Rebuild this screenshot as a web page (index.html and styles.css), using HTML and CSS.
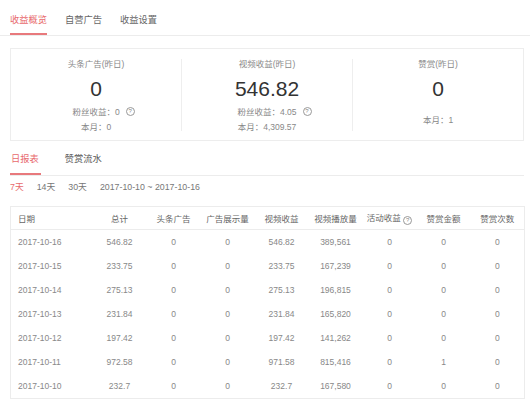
FILE: index.html
```html
<!DOCTYPE html>
<html lang="zh-CN">
<head>
<meta charset="utf-8">
<title>收益概览</title>
<link rel="stylesheet" href="styles.css">
</head>
<body>
<div class="topnav">
  <div class="tab active">收益概览</div>
  <div class="tab">自营广告</div>
  <div class="tab">收益设置</div>
</div>
<div class="content">
  <div class="summary">
    <div class="stat">
      <div class="stat-label">头条广告(昨日)</div>
      <div class="stat-value">0</div>
      <div class="stat-line first"><span class="with-help">粉丝收益：0<i class="help">?</i></span></div>
      <div class="stat-line second">本月：0</div>
    </div>
    <div class="stat">
      <div class="stat-label">视频收益(昨日)</div>
      <div class="stat-value">546.82</div>
      <div class="stat-line first"><span class="with-help">粉丝收益：4.05<i class="help">?</i></span></div>
      <div class="stat-line second">本月：4,309.57</div>
    </div>
    <div class="stat">
      <div class="stat-label">赞赏(昨日)</div>
      <div class="stat-value">0</div>
      <div class="stat-line single">本月：1</div>
    </div>
  </div>

  <div class="subnav">
    <div class="subtab active">日报表</div>
    <div class="subtab">赞赏流水</div>
  </div>

  <div class="filters">
    <span class="range active">7天</span>
    <span class="range">14天</span>
    <span class="range">30天</span>
    <span class="dates">2017-10-10 ~ 2017-10-16</span>
  </div>

  <table class="report">
    <colgroup>
      <col class="c-date">
      <col class="c-num"><col class="c-num"><col class="c-num"><col class="c-num">
      <col class="c-num"><col class="c-num"><col class="c-num"><col class="c-num">
    </colgroup>
    <thead>
      <tr>
        <th class="date">日期</th>
        <th>总计</th>
        <th>头条广告</th>
        <th>广告展示量</th>
        <th>视频收益</th>
        <th>视频播放量</th>
        <th>活动收益 <i class="help inline">?</i></th>
        <th>赞赏金额</th>
        <th>赞赏次数</th>
      </tr>
    </thead>
    <tbody>
      <tr><td class="date">2017-10-16</td><td>546.82</td><td>0</td><td>0</td><td>546.82</td><td>389,561</td><td>0</td><td>0</td><td>0</td></tr>
      <tr><td class="date">2017-10-15</td><td>233.75</td><td>0</td><td>0</td><td>233.75</td><td>167,239</td><td>0</td><td>0</td><td>0</td></tr>
      <tr><td class="date">2017-10-14</td><td>275.13</td><td>0</td><td>0</td><td>275.13</td><td>196,815</td><td>0</td><td>0</td><td>0</td></tr>
      <tr><td class="date">2017-10-13</td><td>231.84</td><td>0</td><td>0</td><td>231.84</td><td>165,820</td><td>0</td><td>0</td><td>0</td></tr>
      <tr><td class="date">2017-10-12</td><td>197.42</td><td>0</td><td>0</td><td>197.42</td><td>141,262</td><td>0</td><td>0</td><td>0</td></tr>
      <tr><td class="date">2017-10-11</td><td>972.58</td><td>0</td><td>0</td><td>971.58</td><td>815,416</td><td>0</td><td>1</td><td>0</td></tr>
      <tr><td class="date">2017-10-10</td><td>232.7</td><td>0</td><td>0</td><td>232.7</td><td>167,580</td><td>0</td><td>0</td><td>0</td></tr>
    </tbody>
  </table>
</div>
</body>
</html>
```

FILE: styles.css
```css
html, body {
  margin: 0;
  padding: 0;
  background: #ffffff;
}

body {
  font-family: "Liberation Sans", "Noto Sans CJK SC", sans-serif;
  color: #777777;
  width: 530px;
  height: 400px;
  overflow: hidden;
}

/* top navigation */
.topnav {
  display: flex;
  gap: 18px;
  padding: 0 10px;
  border-bottom: 1px solid #ececec;
}

.tab {
  font-size: 9.25px;
  line-height: 13px;
  padding-top: 14px;
  padding-bottom: 6px;
  border-bottom: 2px solid transparent;
  color: #666666;
}

.tab.active {
  color: #e86a6d;
  border-bottom-color: #e8797c;
}

.content {
  padding: 0 6px 0 10px;
}

/* summary card */
.summary {
  margin-top: 12px;
  border: 1px solid #ededed;
  display: flex;
  padding: 10px 0 9px;
}

.stat {
  flex: 1 1 0;
  height: 72px;
  text-align: center;
}

.stat + .stat {
  border-left: 1px solid #eeeeee;
}

.stat-label {
  font-size: 8.5px;
  line-height: 11px;
  color: #888888;
}

.stat-value {
  font-size: 21px;
  line-height: 24px;
  margin-top: 7px;
  color: #333333;
}

.stat-line {
  font-size: 8.5px;
  line-height: 10px;
  color: #888888;
}

.stat-line.first {
  margin-top: 6px;
}

.stat-line.second {
  margin-top: 5px;
}

.stat-line.single {
  margin-top: 14px;
}

.with-help {
  position: relative;
}

.help {
  display: inline-block;
  width: 7px;
  height: 7px;
  border: 1px solid #999999;
  border-radius: 50%;
  font-style: normal;
  font-size: 6px;
  line-height: 7px;
  text-align: center;
  color: #888888;
  box-sizing: content-box;
}

.with-help .help {
  position: absolute;
  left: calc(100% + 6px);
  top: 0px;
}

.help.inline {
  vertical-align: -1px;
}

/* sub navigation */
.subnav {
  display: flex;
  gap: 24px;
  border-bottom: 1px solid #ececec;
}

.subtab {
  font-size: 9.25px;
  line-height: 13px;
  padding-top: 12px;
  padding-bottom: 7px;
  border-bottom: 2px solid transparent;
  color: #555555;
}

.subtab.active {
  color: #e86a6d;
  border-bottom-color: #e8797c;
  padding-left: 1px;
  padding-right: 2px;
}

/* filters */
.filters {
  display: flex;
  gap: 13px;
  margin-top: 5px;
  font-size: 8.8px;
  line-height: 12px;
  color: #777777;
}

.range.active {
  color: #e86a6d;
}

/* report table */
.report {
  margin-top: 13px;
  width: 514px;
  table-layout: fixed;
  border-collapse: collapse;
  border: 1px solid #ececec;
  font-size: 8.5px;
}

.c-date {
  width: 82px;
}

.c-num {
  width: 54px;
}

.report th {
  font-weight: normal;
  color: #666666;
  height: 22px;
  padding: 0;
  text-align: center;
  border-bottom: 1px solid #ececec;
  white-space: nowrap;
}

.report td {
  height: 24px;
  padding: 0;
  text-align: center;
  color: #888888;
}

.report .date {
  text-align: left;
  padding-left: 7px;
}
```
